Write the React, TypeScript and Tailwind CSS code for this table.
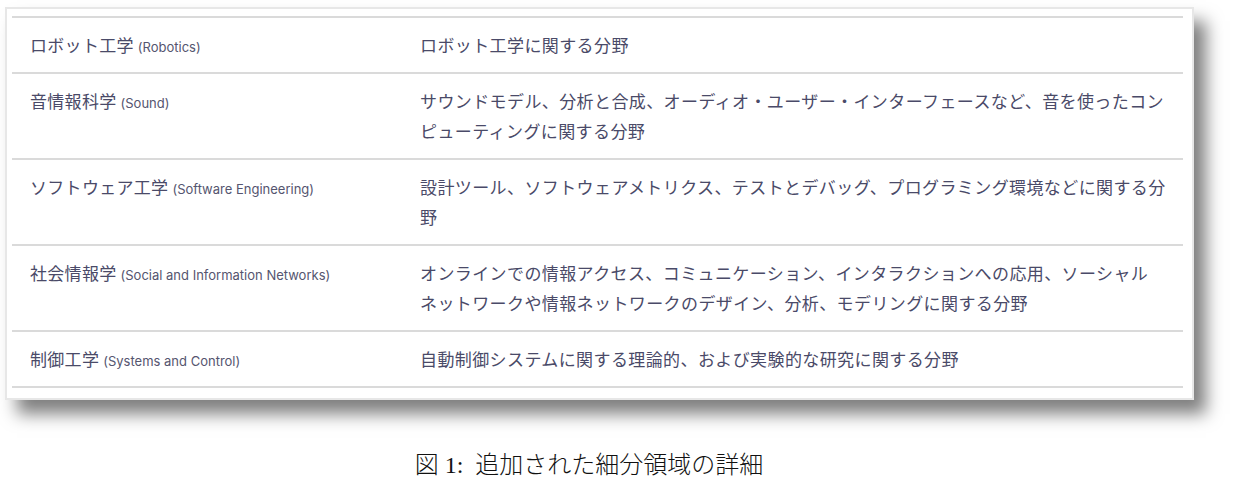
const rows = [
  { jp: 'ロボット工学', en: 'Robotics', desc: ['ロボット工学に関する分野'] },
  {
    jp: '音情報科学',
    en: 'Sound',
    desc: [
      'サウンドモデル、分析と合成、オーディオ・ユーザー・インターフェースなど、音を使ったコン',
      'ピューティングに関する分野',
    ],
  },
  {
    jp: 'ソフトウェア工学',
    en: 'Software Engineering',
    desc: ['設計ツール、ソフトウェアメトリクス、テストとデバッグ、プログラミング環境などに関する分', '野'],
  },
  {
    jp: '社会情報学',
    en: 'Social and Information Networks',
    desc: [
      'オンラインでの情報アクセス、コミュニケーション、インタラクションへの応用、ソーシャル',
      'ネットワークや情報ネットワークのデザイン、分析、モデリングに関する分野',
    ],
  },
  { jp: '制御工学', en: 'Systems and Control', desc: ['自動制御システムに関する理論的、および実験的な研究に関する分野'] },
];

const App = () => {
  return (
    <div className="w-[1234px] h-[493px] bg-white flex flex-col overflow-hidden">
      {/* Screenshot frame */}
      <div className="ml-[5px] mt-[7px] w-[1189px] bg-white border-2 border-[#e7e7e7] pl-[5px] pr-[9px] pt-[7px] pb-[10px] shadow-[12px_14px_16px_rgba(0,0,0,0.5)]">
        <div className="border-t-2 border-[#dadada] text-[#4a4a68] font-['Noto_Sans_CJK_JP',sans-serif]">
          {rows.map(row => (
            <div key={row.jp} className="flex border-b-2 border-[#dadada] py-[12px] leading-[30px]">
              <div className="w-[390px] shrink-0 pl-[18px] h-[30px] text-[17px] tracking-[0.3px]">
                {row.jp}
                <span className="text-[13px] tracking-normal ml-[4px] leading-none font-['Inter',sans-serif] text-[#55556f]">
                  ({row.en})
                </span>
              </div>
              <div className="flex-1 pl-[18px] text-[17px] tracking-[0.4px]">
                {row.desc.map((line, i) => (
                  <div key={i} className="whitespace-nowrap">{line}</div>
                ))}
              </div>
            </div>
          ))}
        </div>
      </div>

      {/* Caption */}
      <div className="w-[1178px] mt-[50px] text-center text-[24px] leading-[30px] text-[#111] font-['Liberation_Serif','Noto_Sans_CJK_JP',serif] font-light">
        図 1:&nbsp; 追加された細分領域の詳細
      </div>
    </div>
  );
};

export default App;
